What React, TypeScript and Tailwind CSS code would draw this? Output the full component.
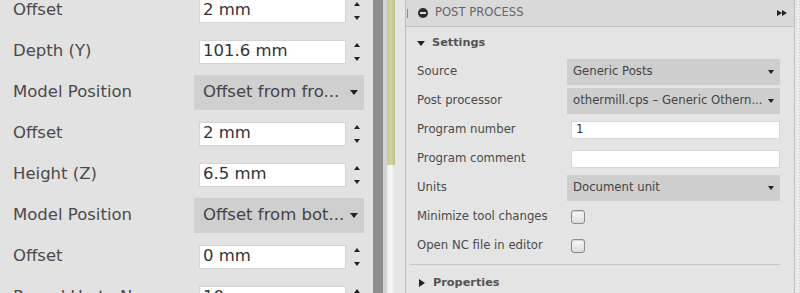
import React from "react";

const font = { fontFamily: '"DejaVu Sans", Verdana, sans-serif' };

function UpTri() {
  return <div className="w-0 h-0 border-x-[3px] border-x-transparent border-b-[4px] border-b-[#222]" />;
}
function DownTri({ big = false }: { big?: boolean }) {
  return big ? (
    <div className="w-0 h-0 border-x-[4px] border-x-transparent border-t-[5px] border-t-[#222]" />
  ) : (
    <div className="w-0 h-0 border-x-[3px] border-x-transparent border-t-[4px] border-t-[#222]" />
  );
}

function LRow({ label, children }: { label: string; children: React.ReactNode }) {
  return (
    <div className="flex h-[41px] shrink-0 items-center">
      <div className="w-[194px] shrink-0 pl-[13px] text-[16.5px] text-[#4a4a4a] whitespace-nowrap">{label}</div>
      {children}
    </div>
  );
}

function LInput({ value }: { value: string }) {
  return (
    <div className="flex items-center">
      <div className="ml-[5px] w-[147px] h-[24px] bg-white border border-[#d4d4d4] flex items-center pl-[3px] text-[16.5px] text-[#333] whitespace-nowrap overflow-hidden">
        {value}
      </div>
      <div className="ml-[6px] w-[10px] h-[24px] flex flex-col justify-between items-center py-[3px]">
        <UpTri />
        <DownTri />
      </div>
    </div>
  );
}

function LSelect({ value }: { value: string }) {
  return (
    <div className="w-[170px] h-[35px] bg-[#cfcfcf] flex items-center justify-between pl-[9px] pr-[6px] text-[16.5px] text-[#444] whitespace-nowrap">
      <span>{value}</span>
      <DownTri big />
    </div>
  );
}

function RRow({ label, children }: { label: string; children: React.ReactNode }) {
  return (
    <div className="flex h-[29px] shrink-0 items-center">
      <div className="w-[161px] shrink-0 pl-[11px] text-[11.7px] text-[#4a4a4a] whitespace-nowrap">{label}</div>
      {children}
    </div>
  );
}

function RSelect({ value }: { value: string }) {
  return (
    <div className="w-[213px] h-[26px] bg-[#cecece] flex items-center justify-between pl-[6px] pr-[6px] text-[11.7px] text-[#444] whitespace-nowrap">
      <span>{value}</span>
      <DownTri />
    </div>
  );
}

function RInput({ value }: { value: string }) {
  return (
    <div className="ml-[4px] w-[209px] h-[18px] bg-white border border-[#d8d8d8] flex items-center pl-[4px] text-[11.7px] text-[#333]">
      {value}
    </div>
  );
}

function Check() {
  return (
    <div className="ml-[4px] w-[14px] h-[14px] rounded-[3px] border border-[#8a8a8a] bg-gradient-to-b from-[#fafafa] to-[#dcdcdc] shadow-[inset_0_1px_1px_rgba(0,0,0,0.15)]" />
  );
}

export default function App() {
  return (
    <div className="flex w-[800px] h-[293px] overflow-hidden bg-[#e2e2e2]" style={font}>
      {/* Left panel */}
      <div className="w-[373px] shrink-0 bg-[#e2e2e2] overflow-hidden">
        <div className="mt-[-10px]">
          <LRow label="Offset"><LInput value="2 mm" /></LRow>
          <LRow label="Depth (Y)"><LInput value="101.6 mm" /></LRow>
          <LRow label="Model Position"><LSelect value="Offset from fro..." /></LRow>
          <LRow label="Offset"><LInput value="2 mm" /></LRow>
          <LRow label="Height (Z)"><LInput value="6.5 mm" /></LRow>
          <LRow label="Model Position"><LSelect value="Offset from bot..." /></LRow>
          <LRow label="Offset"><LInput value="0 mm" /></LRow>
          <LRow label="Round Up to Neare..."><LInput value="10 mm" /></LRow>
        </div>
      </div>

      {/* Divider */}
      <div className="w-[10px] shrink-0 bg-[#8e8e8e]" />
      <div className="w-[4px] shrink-0 bg-[#d2d2d2]" />
      <div className="w-[8px] shrink-0 flex flex-col">
        <div className="h-[165px] bg-gradient-to-r from-[#c9c78f] via-[#d4d2a4] to-[#c2c08a]" />
        <div className="flex-1 bg-gradient-to-r from-[#eeeeea] via-[#f6f6f4] to-[#e2e4e2]" />
      </div>
      <div className="w-[10px] shrink-0 bg-[#e6e6e6]" />

      {/* Right panel */}
      <div className="w-[390px] shrink-0 bg-[#e4e4e4] border-l border-r border-[#bdbdbd] flex flex-col overflow-hidden">
        <div className="h-[27px] shrink-0 bg-[#d9d9d9] border-b border-[#c2c2c2] flex items-center relative">
          <div className="absolute left-[1px] top-[9px] w-[1px] h-[9px] bg-[#8a8a8a]" />
          <div className="ml-[12px] w-[10px] h-[10px] rounded-full bg-[#2a2a2a] flex items-center justify-center">
            <div className="w-[6px] h-[2px] bg-[#d9d9d9]" />
          </div>
          <div className="ml-[7px] text-[11.6px] text-[#666]">POST PROCESS</div>
          <div className="ml-auto mr-[7px] flex items-center">
            <div className="w-0 h-0 border-y-[3.5px] border-y-transparent border-l-[5px] border-l-[#222]" />
            <div className="w-0 h-0 border-y-[3.5px] border-y-transparent border-l-[5px] border-l-[#222]" />
          </div>
        </div>

        <div className="h-[30px] shrink-0 flex items-center pl-[11px] pt-[2px]">
          <DownTri big />
          <span className="ml-[7px] text-[11.3px] font-bold text-[#555]">Settings</span>
        </div>

        <RRow label="Source"><RSelect value="Generic Posts" /></RRow>
        <RRow label="Post processor"><RSelect value="othermill.cps – Generic Othern..." /></RRow>
        <RRow label="Program number"><RInput value="1" /></RRow>
        <RRow label="Program comment"><RInput value="" /></RRow>
        <RRow label="Units"><RSelect value="Document unit" /></RRow>
        <RRow label="Minimize tool changes"><Check /></RRow>
        <RRow label="Open NC file in editor"><Check /></RRow>

        <div className="mt-[4px] ml-[4px] w-[370px] h-[1px] shrink-0 bg-[#c6c6c6]" />
        <div className="h-[36px] shrink-0 flex items-center pl-[13px]">
          <div className="w-0 h-0 border-y-[4px] border-y-transparent border-l-[6px] border-l-[#222]" />
          <span className="ml-[8px] text-[11.3px] font-bold text-[#555]">Properties</span>
        </div>
      </div>

      <div className="w-[5px] shrink-0 bg-[#ececec] bg-[radial-gradient(#cfcfcf_1px,transparent_1px)] bg-[length:3px_3px]" />
    </div>
  );
}
